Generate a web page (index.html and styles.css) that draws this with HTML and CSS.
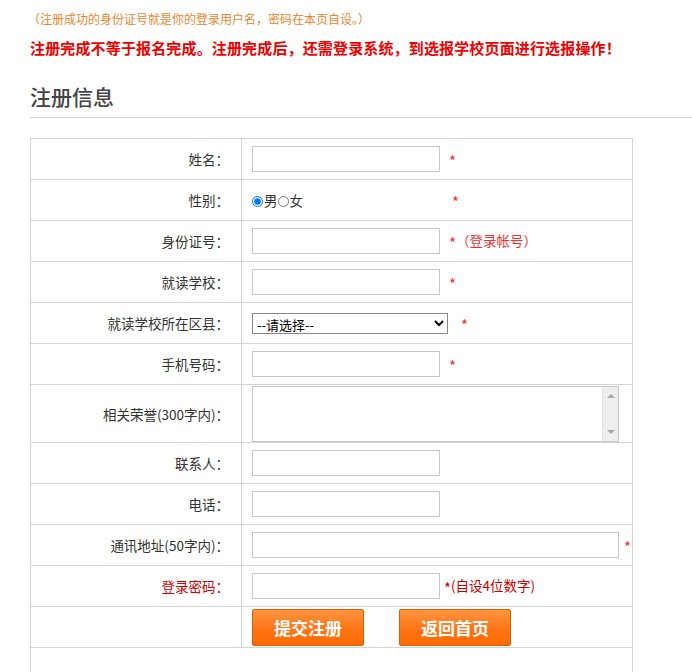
FILE: index.html
```html
<!DOCTYPE html>
<html lang="zh-CN">
<head>
    <meta charset="UTF-8">
    <meta name="viewport" content="width=device-width, initial-scale=1.0">
    <title>注册信息</title>
    <link rel="stylesheet" href="styles.css">
</head>
<body>
    <div class="page">
        <p class="tip">（注册成功的身份证号就是你的登录用户名，密码在本页自设。）</p>
        <p class="warn">注册完成不等于报名完成。注册完成后，还需登录系统，到选报学校页面进行选报操作！</p>
        <h2 class="title">注册信息</h2>
        <table class="form">
            <tr>
                <td class="label">姓名：</td>
                <td><input type="text" class="txt"><span class="star"><i>*</i></span></td>
            </tr>
            <tr>
                <td class="label">性别：</td>
                <td>
                    <label class="radio"><input type="radio" name="sex" checked>男</label><label class="radio"><input type="radio" name="sex">女</label>
                    <span class="star star-sex"><i>*</i></span>
                </td>
            </tr>
            <tr>
                <td class="label">身份证号：</td>
                <td><input type="text" class="txt"><span class="star"><i>*</i>（登录帐号）</span></td>
            </tr>
            <tr>
                <td class="label">就读学校：</td>
                <td><input type="text" class="txt"><span class="star"><i>*</i></span></td>
            </tr>
            <tr>
                <td class="label">就读学校所在区县：</td>
                <td>
                    <select class="sel"><option>--请选择--</option></select><span class="star star-sel"><i>*</i></span>
                </td>
            </tr>
            <tr>
                <td class="label">手机号码：</td>
                <td><input type="text" class="txt"><span class="star"><i>*</i></span></td>
            </tr>
            <tr class="tall">
                <td class="label">相关荣誉(300字内)：</td>
                <td>
                    <div class="area-wrap">
                        <textarea class="area"></textarea>
                        <span class="fake-bar"><b class="up"></b><b class="down"></b></span>
                    </div>
                </td>
            </tr>
            <tr>
                <td class="label">联系人：</td>
                <td><input type="text" class="txt"></td>
            </tr>
            <tr>
                <td class="label">电话：</td>
                <td><input type="text" class="txt"></td>
            </tr>
            <tr>
                <td class="label">通讯地址(50字内)：</td>
                <td><input type="text" class="txt txt-wide"><span class="star star-wide"><i>*</i></span></td>
            </tr>
            <tr>
                <td class="label label-red">登录密码：</td>
                <td><input type="password" class="txt"><span class="star star-pwd"><i>*</i>(自设4位数字)</span></td>
            </tr>
            <tr>
                <td class="label"></td>
                <td class="btns">
                    <button class="btn">提交注册</button>
                    <button class="btn">返回首页</button>
                </td>
            </tr>
            <tr class="empty">
                <td colspan="2"></td>
            </tr>
        </table>
    </div>
</body>
</html>
```

FILE: styles.css
```css
body { margin: 0; font-family: "Noto Sans CJK SC", "Liberation Sans", sans-serif; font-size: 13px; color: #333; background: #fff; }
.page { margin-left: 30px; }
.tip { margin: 10px 0 0 -2px; font-size: 12px; line-height: 18px; color: #e8862e; }
.warn { margin: 10px 0 0 0; font-size: 15px; line-height: 20px; font-weight: bold; color: #e00; letter-spacing: 0.15px; }
.title { margin: 23px 0 0 0; padding-bottom: 6px; font-size: 21px; line-height: 30px; font-weight: 500; color: #444; border-bottom: 1px solid #d2d2d2; }

.form { margin-top: 20px; width: 603px; border-collapse: collapse; }
.form td { height: 40px; padding: 0 0 0 10px; border: 1px solid #d4d4d4; vertical-align: middle; white-space: nowrap; }
.form td.label { width: 198px; padding: 0 12px 0 0; text-align: right; font-size: 13.5px; }
.label-red { color: #c00; }
.form tr.tall td { height: 57px; }
.form tr.empty td { height: 40px; border-bottom: none; }

.txt { width: 188px; height: 26px; box-sizing: border-box; margin: 0; padding: 0 4px; border: 1px solid #c8c8c8; font-size: 13px; vertical-align: middle; }
.txt-wide { width: 367px; }
.star { margin-left: 9px; font-size: 13.5px; color: #e33; vertical-align: middle; }
.star i { font-style: normal; font-size: 15px; vertical-align: -3px; }
.star-sex { margin-left: 146px; }
.star-sel { margin-left: 13px; }
.star-wide { margin-left: 5px; }
.star-pwd { margin-left: 4px; color: #c00; }

.radio { font-size: 13.5px; vertical-align: middle; }
.radio input { width: 11px; height: 11px; margin: 0 1px 0 0; vertical-align: -1px; }

.sel { width: 196px; height: 21px; margin: 0; padding: 0; border: 1px solid #888; border-radius: 0; font-size: 13px; font-family: inherit; color: #000; background: #fff; vertical-align: middle; }

.area-wrap { position: relative; width: 367px; height: 56px; margin-top: 1px; }
.area { display: block; width: 100%; height: 100%; box-sizing: border-box; margin: 0; padding: 2px 18px 2px 3px; border: 1px solid #c8c8c8; resize: none; overflow: hidden; }
/* scrollbar drawn over the textarea, the headless browser hides the real one */
.fake-bar { position: absolute; top: 1px; right: 1px; bottom: 1px; width: 15px; background: #eeeeee; border-left: 1px solid #e2e2e2; }
.fake-bar b { position: absolute; left: 4px; width: 0; height: 0; border-left: 4px solid transparent; border-right: 4px solid transparent; }
.fake-bar .up { top: 7px; border-bottom: 4px solid #a8a8a8; }
.fake-bar .down { bottom: 7px; border-top: 4px solid #a8a8a8; }

.btns { padding-top: 2px; }
.btn { width: 112px; height: 37px; margin: 0 32px 0 0; border: 1px solid #d8620c; border-radius: 2px; background: linear-gradient(#ff9640, #ff7416 55%, #ff6a00); color: #fff; font-family: "Noto Sans CJK SC", sans-serif; font-size: 17px; font-weight: bold; cursor: pointer; vertical-align: middle; }
.btn + .btn { margin-right: 0; }
```
